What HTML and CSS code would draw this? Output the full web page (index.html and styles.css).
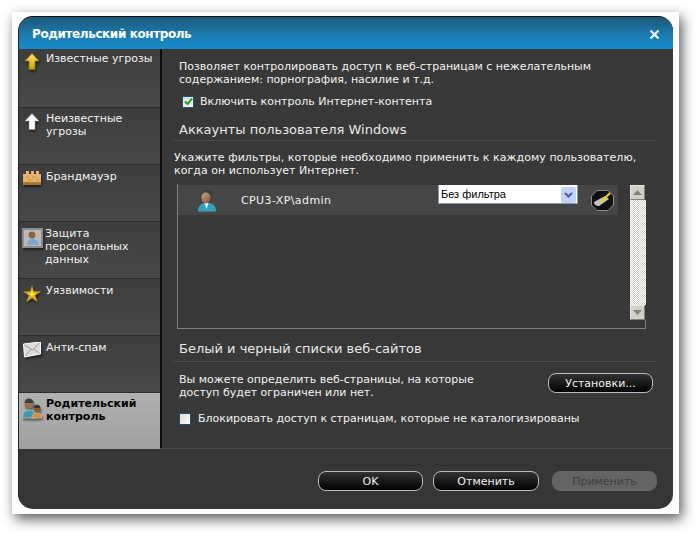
FILE: index.html
```html
<!DOCTYPE html>
<html lang="ru">
<head>
  <meta charset="UTF-8">
  <title>Родительский контроль</title>
  <link rel="stylesheet" href="styles.css">
</head>
<body>
  <div class="frame">
    <div class="dialog">
      <header class="titlebar">
        <h1>Родительский контроль</h1>
        <svg class="close" width="11" height="11" viewBox="0 0 11 11"><path d="M1.500 1.500l8 8M9.500 1.500l-8 8" stroke="#eef3f6" stroke-width="2.400"/></svg>
      </header>

      <div class="middle">
        <nav class="sidebar">
          <div class="nav-item first">
            <svg width="15" height="17" viewBox="0 0 15 17"><defs><linearGradient id="gold" x1="0" y1="0" x2="0" y2="1"><stop offset="0" stop-color="#ffe96a"/><stop offset="1" stop-color="#c99a00"/></linearGradient></defs><path d="M7.500 .5L14.500 8H10.500V16.500H4.500V8H.5Z" fill="url(#gold)" stroke="#9c7a00" stroke-width=".6"/></svg>
            <span>Известные угрозы</span>
          </div>
          <div class="nav-item">
            <svg width="15" height="17" viewBox="0 0 15 17"><path d="M7.500 .5L14.500 8H10.500V16.500H4.500V8H.5Z" fill="#fff" stroke="#999" stroke-width=".5"/></svg>
            <span>Неизвестные угрозы</span>
          </div>
          <div class="nav-item low">
            <svg width="18" height="14" viewBox="0 0 18 14"><path d="M0 3H3V0H6V3H8V0H11V3H13V0H16V3H18V13H0Z" fill="#e9b46a"/><path d="M0 11H18V14H0Z" fill="#a87434"/><path d="M3 6h3M9 6h4M5 9h5M13 9h3" stroke="#c48c48"/></svg>
            <span>Брандмауэр</span>
          </div>
          <div class="nav-item low narrow">
            <svg width="22" height="20" viewBox="0 0 22 20"><rect width="21" height="20" fill="#8d8d8d"/><rect x="2" y="2" width="17" height="16" fill="#b9b9b9"/><circle cx="10" cy="7" r="3.400" fill="#8a6244"/><path d="M5 17c0-5 3-6 5.500-6s6 1 6 6Z" fill="#7ea6cf"/></svg>
            <span>Защита персональных данных</span>
          </div>
          <div class="nav-item low">
            <svg width="19" height="18" viewBox="0 0 19 18"><path d="M9.500 0L11.200 6.200 18.500 6.600 12.800 10.500 15 17 9.500 13.200 4 17 6.200 10.500 .5 6.600 7.800 6.200Z" fill="#d6a512"/><path d="M9.500 5L10.600 8 13.500 8.500 11 10 9.500 12 8 10 5.500 8.500 8.400 8Z" fill="#ffe65a"/></svg>
            <span>Уязвимости</span>
          </div>
          <div class="nav-item low">
            <svg width="19" height="16" viewBox="0 0 19 16"><path d="M1 2L18 0 18 12 2 15Z" fill="#dcdcdc" stroke="#fff"/><path d="M2 3L10 8 17 1M3 14L9 7M17 11L11 7" fill="none" stroke="#999"/></svg>
            <span>Анти-спам</span>
          </div>
          <div class="nav-item active">
            <svg width="20" height="21" viewBox="0 0 20 21"><path d="M.5 20c0-6 2.500-8 6.500-8s7 2 7 8Z" fill="#3f9bb0" stroke="#d8d8c8" stroke-width=".6"/><circle cx="7" cy="6" r="4.500" fill="#9a7050"/><path d="M2.500 5a4.500 4.500 0 0 1 9 0Z" fill="#3c3c3c"/><path d="M10 20c0-4 2-5 5-5s4.500 1 4.500 5Z" fill="#d98a2c" stroke="#d8d8c8" stroke-width=".6"/><circle cx="15" cy="11" r="3.200" fill="#8a5d3c"/><path d="M11.800 10a3.200 3.200 0 0 1 6.400 0Z" fill="#333"/></svg>
            <span>Родительский контроль</span>
          </div>
        </nav>

        <main class="content">
          <p class="intro">Позволяет контролировать доступ к веб-страницам с нежелательным содержанием: порнография, насилие и т.д.</p>
          <label class="check first-check">
            <span class="box on"><svg width="9" height="9" viewBox="0 0 9 9"><path d="M1 4.500L3.500 7 8 1.500" fill="none" stroke="#1fa51f" stroke-width="2"/></svg></span>
            Включить контроль Интернет-контента
          </label>

          <h2 class="accounts">Аккаунты пользователя Windows</h2>
          <p class="hint">Укажите фильтры, которые необходимо применить к каждому пользователю, когда он использует Интернет.</p>

          <div class="userlist">
            <div class="user-rows">
              <div class="user-row">
                <svg class="user-icon" width="18" height="22" viewBox="0 0 18 22"><defs><linearGradient id="face" x1="0" y1="0" x2="1" y2="1"><stop offset="0" stop-color="#d0a680"/><stop offset="1" stop-color="#7d5638"/></linearGradient></defs><path d="M0 21.500c0-6 3-8.500 9-8.500s9 2.500 9 8.500Z" fill="#34a3b8"/><path d="M6.500 13h4l-2 6Z" fill="#eee"/><path d="M4 5a5 5 0 0 1 10 0c0 4-2 8-5 8s-5-4-5-8Z" fill="#3c3c3c"/><path d="M3.500 7a4.500 4.500 0 0 1 9 0c0 3.500-2 6.500-4.500 6.500S3.500 10.500 3.500 7Z" fill="url(#face)"/></svg>
                <span class="user-name">CPU3-XP\admin</span>
                <div class="select">
                  <span>Без фильтра</span>
                  <span class="select-arrow"><svg width="9" height="6" viewBox="0 0 9 6"><path d="M1 1L4.500 4.500 8 1" fill="none" stroke="#4d6185" stroke-width="2"/></svg></span>
                </div>
                <button class="edit-btn"><svg width="23" height="21" viewBox="0 0 23 21"><path d="M6 .5H17L22.500 6V15L17 20.500H6L.5 15V6Z" fill="#111" stroke="#8a8a8a"/><path d="M3 12L14 6 18 9 8 16Q3 16 3 12Z" fill="#c4c4c4"/><path d="M9 13L19 3" stroke="#f0c91c" stroke-width="2.200"/></svg></button>
              </div>
            </div>
            <div class="scrollbar">
              <span class="scroll-btn"><svg width="9" height="5" viewBox="0 0 9 5"><path d="M4.500 0L9 5H0Z" fill="#808080"/></svg></span>
              <span class="scroll-track"></span>
              <span class="scroll-btn"><svg width="9" height="5" viewBox="0 0 9 5"><path d="M0 0H9L4.500 5Z" fill="#808080"/></svg></span>
            </div>
          </div>

          <h2 class="websites">Белый и черный списки веб-сайтов</h2>
          <div class="lists-row">
            <p>Вы можете определить веб-страницы, на которые доступ будет ограничен или нет.</p>
            <button class="btn settings">Установки...</button>
          </div>
          <label class="check block-check">
            <span class="box"></span>
            Блокировать доступ к страницам, которые не каталогизированы
          </label>
        </main>
      </div>

      <footer class="buttons">
        <button class="btn">OK</button>
        <button class="btn wide">Отменить</button>
        <button class="btn disabled">Применить</button>
      </footer>
    </div>
  </div>
</body>
</html>
```

FILE: styles.css
```css
* {
  box-sizing: border-box;
  margin: 0;
  padding: 0;
}

body {
  width: 699px;
  height: 534px;
  padding: 12px 0 0 12px;
  background-color: #fff;
  font-family: "DejaVu Sans", Verdana, sans-serif;
  font-size: 11px;
  line-height: 13px;
  color: #f2f2f2;
  overflow: hidden;
}

.frame {
  width: 667px;
  height: 502px;
  padding: 4px 6px;
  background-color: #fff;
  box-shadow: 3px 5px 12px rgba(0, 0, 0, 0.65);
}

.dialog {
  display: flex;
  flex-direction: column;
  width: 655px;
  height: 493px;
  background-color: #363636;
  border-top: 1px solid #111;
  border-left: 1px solid #222;
  border-radius: 15px;
  overflow: hidden;
}

.titlebar {
  display: flex;
  align-items: center;
  justify-content: space-between;
  flex: none;
  height: 32px;
  padding: 2px 13px 0 13px;
  background: linear-gradient(#1d5878, #1a7db5 60%, #178cca);
}

.titlebar h1 {
  font-size: 12px;
  font-weight: bold;
  letter-spacing: -0.4px;
  color: #fff;
}

.middle {
  display: flex;
  flex: none;
  height: 400px;
  border-bottom: 1px solid #484848;
}

.sidebar {
  flex: none;
  width: 143px;
  border-right: 2px solid #0c0c0c;
}

.nav-item {
  display: flex;
  gap: 4px;
  height: 57px;
  padding: 4px 4px 0 3px;
  background: linear-gradient(#3d3d3d, #484848);
  border-bottom: 1px solid #2c2c2c;
}

.nav-item svg {
  flex: none;
  width: 20px;
  margin-top: 1px;
  filter: drop-shadow(1px 2px 1px rgba(0, 0, 0, 0.5));
}

.nav-item.first {
  height: 59px;
  padding-top: 3px;
}

.nav-item.low {
  padding-top: 5px;
}

.nav-item.narrow {
  gap: 1px;
}

.nav-item.narrow svg {
  width: 22px;
}

.nav-item.active {
  height: 56px;
  background: linear-gradient(#b1b1b1, #a0a0a0);
  border-bottom: 0;
  color: #000;
  font-weight: bold;
}

.content {
  flex: 1;
  min-width: 0;
  padding: 11px 17px 0 11px;
  background-color: #383838;
}

.intro {
  padding: 0 60px 0 6px;
}

.check {
  display: flex;
  align-items: center;
}

.box {
  display: flex;
  align-items: center;
  justify-content: center;
  width: 12px;
  height: 12px;
  background: linear-gradient(135deg, #dcdcd6, #fff);
  border: 1px solid #1c5180;
}

.first-check {
  gap: 6px;
  margin: 9px 0 0 9px;
}

h2 {
  padding: 0 0 2px 6px;
  font-size: 13px;
  font-weight: normal;
  line-height: 16px;
  color: #e8e8e8;
  border-bottom: 1px solid #4c4c4c;
}

.accounts {
  margin-top: 14px;
}

.hint {
  margin: 10px 0 0 1px;
  letter-spacing: 0.05px;
}

.userlist {
  display: flex;
  width: 469px;
  height: 145px;
  margin: 7px 0 0 4px;
  border-left: 1px solid #808080;
  border-bottom: 1px solid #808080;
}

.user-rows {
  flex: 1;
}

.user-row {
  display: flex;
  align-items: flex-start;
  width: 440px;
  height: 30px;
  margin-top: 1px;
  background-color: #464646;
}

.user-icon {
  flex: none;
  margin: 5px 0 0 20px;
}

.user-name {
  width: 197px;
  margin: 9px 0 0 25px;
  letter-spacing: 0.4px;
}

.select {
  display: flex;
  align-items: center;
  justify-content: space-between;
  width: 140px;
  height: 19px;
  padding: 1px 1px 0 2px;
  background-color: #fff;
  border: 1px solid #7f9db9;
  border-top: 0;
  color: #000;
  font-family: "Liberation Sans", Arial, sans-serif;
}

.select-arrow {
  display: flex;
  align-items: center;
  justify-content: center;
  width: 15px;
  height: 16px;
  background-color: #c1d2fb;
  border-radius: 2px;
}

.edit-btn {
  flex: none;
  display: flex;
  margin: 5px 0 0 13px;
  background: none;
  border: 0;
}

.scrollbar {
  display: flex;
  flex-direction: column;
  width: 16px;
  margin-top: 1px;
}

.scrollbar::after {
  content: "";
  flex: none;
  height: 8px;
  border-right: 1px solid #808080;
}

.scroll-btn {
  display: flex;
  flex: none;
  align-items: center;
  justify-content: center;
  width: 15px;
  height: 15px;
  background-color: #d4d0c8;
  border: 1px solid #e8e6e0;
  border-right-color: #808080;
  border-bottom-color: #808080;
}

.scroll-track {
  flex: 1;
  background-color: #fff;
  background-image: conic-gradient(#d4d0c8 25%, #fff 0 50%, #d4d0c8 0 75%, #fff 0);
  background-size: 2px 2px;
}

.websites {
  margin-top: 12px;
  padding-bottom: 4px;
}

.lists-row {
  display: flex;
  justify-content: space-between;
  margin-top: 11px;
  padding: 0 3px 0 6px;
}

.lists-row p {
  width: 330px;
}

.btn {
  flex: none;
  width: 105px;
  height: 20px;
  background: linear-gradient(#333, #000);
  border: 1px solid #bbb;
  border-radius: 8px;
  color: #f2f2f2;
  font-family: inherit;
  font-size: 11px;
}

.btn.wide {
  width: 106px;
}

.btn.disabled {
  margin-left: 3px;
  background: #636363;
  border-color: #636363;
  color: #3e3e3e;
}

.block-check {
  gap: 7px;
  margin: 13px 0 0 6px;
}

.buttons {
  display: flex;
  gap: 10px;
  justify-content: flex-end;
  padding: 22px 16px 0 0;
}
```
